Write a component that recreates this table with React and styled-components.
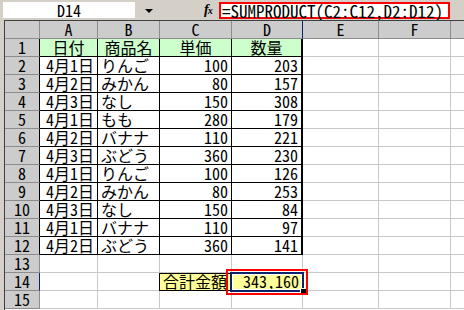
import React from "react";
import styled, { createGlobalStyle } from "styled-components";

const GlobalStyle = createGlobalStyle`
  html, body {
    margin: 0;
    padding: 0;
    background: #d4d0c8;
  }
`;

const colors = {
  toolbar: "#d4d0c8",
  header: "#cccccc",
  headerLine: "#8c8c8c",
  grid: "#c8c8c8",
  frame: "#404040",
  green: "#ccffcc",
  yellow: "#ffff99",
  red: "#ff0000",
  navy: "#0a246a",
};

const font = `"Noto Sans CJK JP", "Noto Sans", sans-serif`;

const columns = [
  { name: "A", width: 58 },
  { name: "B", width: 62 },
  { name: "C", width: 72 },
  { name: "D", width: 71 },
  { name: "E", width: 76 },
  { name: "F", width: 72 },
  { name: "G", width: 60 },
];

const sales = [
  ["4月1日", "りんご", 100, 203],
  ["4月2日", "みかん", 80, 157],
  ["4月3日", "なし", 150, 308],
  ["4月1日", "もも", 280, 179],
  ["4月2日", "バナナ", 110, 221],
  ["4月3日", "ぶどう", 360, 230],
  ["4月1日", "りんご", 100, 126],
  ["4月2日", "みかん", 80, 253],
  ["4月3日", "なし", 150, 84],
  ["4月1日", "バナナ", 110, 97],
  ["4月2日", "ぶどう", 360, 141],
];

const Window = styled.div`
  width: 464px;
  height: 310px;
  overflow: hidden;
  background: ${colors.toolbar};
  display: flex;
  flex-direction: column;
  font-family: ${font};
  font-feature-settings: "hwid" 1;
`;

const FormulaBar = styled.div`
  height: 20px;
  box-sizing: border-box;
  padding: 2px 0 0 3px;
  display: flex;
  align-items: flex-start;
  flex-shrink: 0;
`;

const NameBox = styled.div`
  width: 132px;
  height: 16px;
  background: #fff;
  font-size: 16px;
  line-height: 16px;
  text-align: center;
  color: #000;
`;

const DropArrow = styled.div`
  width: 0;
  height: 0;
  margin: 7px 0 0 10px;
  border-left: 4px solid transparent;
  border-right: 4px solid transparent;
  border-top: 4px solid #000;
`;

const FxLabel = styled.div`
  margin: 0 0 0 51px;
  width: 14px;
  font-family: "Liberation Serif", serif;
  font-style: italic;
  font-weight: bold;
  font-size: 14px;
  line-height: 16px;
  color: #000;
  letter-spacing: -1px;

  & small {
    font-size: 10px;
  }
`;

const FormulaBox = styled.div`
  margin-left: 1px;
  width: 231px;
  height: 17px;
  box-sizing: border-box;
  border: 2px solid ${colors.red};
  background: #fff;
  font-size: 17px;
  line-height: 14px;
  padding-left: 1px;
  white-space: nowrap;
  color: #000;
`;

const SheetArea = styled.div`
  flex: 1;
  padding-left: 4px;
  display: flex;
`;

const Sheet = styled.div`
  flex: 1;
  display: grid;
  grid-template-columns: 35px ${columns.map((c) => `${c.width}px`).join(" ")};
  grid-auto-rows: 18px;
  border-top: 1px solid ${colors.frame};
  border-left: 1px solid ${colors.frame};
  background: #fff;
  overflow: hidden;
`;

const HeadCell = styled.div`
  box-sizing: border-box;
  background: ${colors.header};
  border-right: 1px solid ${(p) => p.$edge || colors.headerLine};
  border-bottom: 1px solid ${colors.headerLine};
  font-size: 16px;
  line-height: 17px;
  text-align: center;
  color: #000;
  white-space: nowrap;
`;

const Cell = styled.div`
  position: relative;
  z-index: ${(p) => (p.$active ? 2 : "auto")};
  box-sizing: border-box;
  background: ${(p) => p.$bg || "#fff"};
  border-right: ${(p) => p.$rw || 1}px solid ${(p) => p.$right || colors.grid};
  border-bottom: 1px solid ${(p) => p.$bottom || colors.grid};
  box-shadow: ${(p) => (p.$boxed ? "inset 0 1px 0 #000, -1px 0 0 #000" : "none")};
  font-size: 16px;
  line-height: 17px;
  padding: 0 3px;
  text-align: ${(p) => p.$align || "left"};
  color: #000;
  white-space: nowrap;
`;

const Selection = styled.div`
  position: absolute;
  left: -2px;
  top: -1px;
  right: -2px;
  bottom: -2px;
  border: 2px solid ${colors.navy};
  box-shadow: inset 0 0 0 1px #fff;
  pointer-events: none;
`;

const FillHandle = styled.div`
  position: absolute;
  right: -5px;
  bottom: -5px;
  width: 5px;
  height: 5px;
  background: #000;
  border: 1px solid #fff;
`;

const Callout = styled.div`
  position: absolute;
  left: -6px;
  top: -4px;
  right: -6px;
  bottom: -5px;
  border: 2px solid ${colors.red};
  pointer-events: none;
`;

const TableRow = ({ num, cells }) => (
  <>
    <HeadCell $edge={num <= 12 ? "#000" : undefined}>{num}</HeadCell>
    {cells}
    <Cell />
    <Cell />
    <Cell />
  </>
);

const EmptyCells = () => (
  <>
    <Cell />
    <Cell />
    <Cell />
    <Cell />
  </>
);

const App = () => {
  const ruled = { $right: "#000", $bottom: "#000" };

  return (
    <Window>
      <GlobalStyle />
      <FormulaBar>
        <NameBox>D14</NameBox>
        <DropArrow />
        <FxLabel>
          f<small>x</small>
        </FxLabel>
        <FormulaBox>=SUMPRODUCT(C2:C12,D2:D12)</FormulaBox>
      </FormulaBar>
      <SheetArea>
        <Sheet>
          <HeadCell />
          {columns.map((c) => (
            <HeadCell key={c.name} $edge={c.name === "D" ? colors.navy : undefined}>
              {c.name}
            </HeadCell>
          ))}

          <TableRow
            num={1}
            cells={
              <>
                <Cell {...ruled} $bg={colors.green} $align="center">日付</Cell>
                <Cell {...ruled} $bg={colors.green} $align="center">商品名</Cell>
                <Cell {...ruled} $bg={colors.green} $align="center">単価</Cell>
                <Cell {...ruled} $rw={2} $bg={colors.green} $align="center">数量</Cell>
              </>
            }
          />

          {sales.map(([date, item, price, qty], i) => (
            <TableRow
              key={i}
              num={i + 2}
              cells={
                <>
                  <Cell {...ruled} $align="right">{date}</Cell>
                  <Cell {...ruled}>{item}</Cell>
                  <Cell {...ruled} $align="right">{price}</Cell>
                  <Cell {...ruled} $rw={2} $align="right">{qty}</Cell>
                </>
              }
            />
          ))}

          <TableRow num={13} cells={<EmptyCells />} />

          <HeadCell $edge={colors.navy}>14</HeadCell>
          <Cell />
          <Cell />
          <Cell $bg={colors.yellow} $right="#000" $bottom="#000" $boxed>
            合計金額
          </Cell>
          <Cell $bg={colors.yellow} $align="right" $active>
            343,160
            <Selection />
            <FillHandle />
            <Callout />
          </Cell>
          <Cell />
          <Cell />
          <Cell />

          <TableRow num={15} cells={<EmptyCells />} />
        </Sheet>
      </SheetArea>
    </Window>
  );
};

export default App;
